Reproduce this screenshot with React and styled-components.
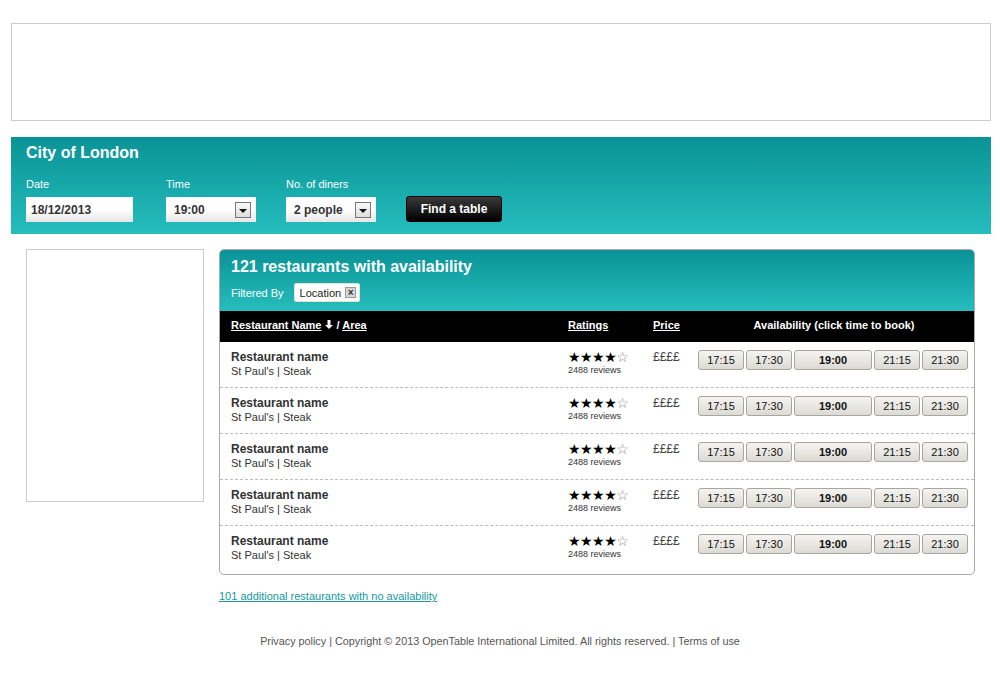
import React from 'react'
import styled, { createGlobalStyle } from 'styled-components'

const GlobalStyle = createGlobalStyle`
  body {
    margin: 0;
    background: #fff;
    font-family: "Liberation Sans", Arial, sans-serif;
    color: #333;
  }
`

const Page = styled.div`
  width: 1000px;
  padding-top: 23px;
`

const AdBox = styled.div`
  margin-left: 11px;
  width: 980px;
  height: 98px;
  box-sizing: border-box;
  border: 1px solid #ccc;
`

const SearchBar = styled.div`
  margin: 16px 0 0 11px;
  width: 980px;
  height: 97px;
  box-sizing: border-box;
  padding: 7px 15px 0;
  background: linear-gradient(to bottom, #0a9397, #26bdbd);
  color: #fff;

  h2 {
    margin: 0;
    font-size: 16px;
    font-weight: bold;
    line-height: 18px;
  }
`

const Fields = styled.div`
  display: flex;
  align-items: flex-end;
  margin-top: 16px;
`

const Field = styled.div`
  width: ${(p) => p.w}px;
  label {
    display: block;
    font-size: 11px;
    line-height: 13px;
    margin-bottom: 6px;
  }
`

const Input = styled.div`
  box-sizing: border-box;
  width: ${(p) => p.w}px;
  height: 25px;
  display: flex;
  align-items: center;
  justify-content: space-between;
  padding: 0 5px 0 ${(p) => p.pl || 5}px;
  background: linear-gradient(to bottom, #fff 50%, #e6e6e6);
  color: #333;
  font-size: 12px;
  font-weight: bold;
`

const DropArrow = styled.span`
  width: 16px;
  height: 16px;
  box-sizing: border-box;
  border: 1px solid #777;
  background: linear-gradient(to bottom, #fafafa, #ddd);
  display: flex;
  align-items: center;
  justify-content: center;
  &::after {
    content: '';
    border-left: 4px solid transparent;
    border-right: 4px solid transparent;
    border-top: 4px solid #111;
    margin-top: 2px;
  }
`

const FindButton = styled.button`
  width: 96px;
  height: 26px;
  border: 1px solid #000;
  border-radius: 3px;
  background: linear-gradient(to bottom, #3a3a3a, #000);
  color: #fff;
  font-family: inherit;
  font-size: 12px;
  font-weight: bold;
  padding: 0;
`

const Content = styled.div`
  display: flex;
  gap: 15px;
  margin: 15px 0 0 26px;
`

const SideBox = styled.div`
  width: 178px;
  height: 253px;
  box-sizing: border-box;
  border: 1px solid #ccc;
`

const Main = styled.div`
  width: 756px;
`

const Panel = styled.div`
  box-sizing: border-box;
  border: 1px solid #aaa;
  border-radius: 5px;
  overflow: hidden;
  padding-bottom: 2px;
`

const PanelHead = styled.div`
  height: 61px;
  box-sizing: border-box;
  padding: 8px 11px 0;
  background: linear-gradient(to bottom, #0a9397, #26bdbd);
  color: #fff;

  h1 {
    margin: 0;
    font-size: 16px;
    line-height: 18px;
  }
`

const FilterRow = styled.div`
  display: flex;
  align-items: center;
  margin-top: 7px;
  font-size: 11px;
  gap: 10px;
`

const Pill = styled.span`
  display: inline-flex;
  align-items: center;
  gap: 4px;
  height: 19px;
  box-sizing: border-box;
  padding: 0 3px 0 5px;
  background: #fff;
  border: 1px solid #e8e2c8;
  border-radius: 2px;
  color: #222;
  font-size: 11px;
`

const CloseBox = styled.span`
  width: 11px;
  height: 11px;
  box-sizing: border-box;
  border: 1px solid #999;
  background: #d6d6d6;
  color: #333;
  font-size: 10px;
  line-height: 9px;
  text-align: center;
  font-weight: bold;
`

const Grid = styled.div`
  display: grid;
  grid-template-columns: 337px 85px 45px 1fr;
  padding: 0 6px 0 11px;
`

const HeadRow = styled(Grid)`
  background: #000;
  color: #fff;
  height: 31px;
  box-sizing: border-box;
  padding-bottom: 4px;
  align-items: center;
  font-size: 11px;
  font-weight: bold;

  a {
    color: #fff;
    text-decoration: underline;
  }
`

const AvailHead = styled.span`
  text-align: center;
  padding-left: 2px;
`

const Row = styled(Grid)`
  height: 46px;
  box-sizing: border-box;
  padding-top: 8px;
  border-bottom: ${(p) => (p.last ? 'none' : '1px dashed #bbb')};
`

const NameCell = styled.div`
  strong {
    display: block;
    font-size: 12px;
    line-height: 14px;
    color: #333;
  }
  span {
    display: block;
    font-size: 11px;
    line-height: 14px;
    color: #333;
  }
`

const RatingCell = styled.div`
  .stars {
    font-family: "DejaVu Sans", sans-serif;
    font-size: 14px;
    line-height: 14px;
    color: #000;
    letter-spacing: -0.5px;
  }
  .empty {
    color: #888;
  }
  .reviews {
    font-size: 9px;
    line-height: 13px;
    color: #333;
  }
`

const Price = styled.div`
  font-size: 12px;
  color: #444;
`

const Times = styled.div`
  display: flex;
  gap: 2px;
`

const TimeButton = styled.button`
  width: ${(p) => (p.wide ? 78 : 46)}px;
  height: 20px;
  padding: 0;
  border: 1px solid #a9a59c;
  border-radius: 3px;
  background: linear-gradient(to bottom, #f4f4f2, #dcdad4);
  font-family: inherit;
  font-size: 11px;
  font-weight: ${(p) => (p.wide ? 'bold' : 'normal')};
  color: #111;
`

const MoreLink = styled.a`
  display: inline-block;
  margin-top: 15px;
  font-size: 11px;
  color: #16979c;
  text-decoration: underline;
`

const Footer = styled.div`
  text-align: center;
  margin-top: 31px;
  font-size: 10.8px;
  color: #555;
`

const SortArrow = () => (
  <svg width="8" height="9" viewBox="0 0 8 9" style={{ margin: '0 3px 0 4px' }}>
    <path d="M2.5 0h3v5h2.5L4 9 0 5h2.5z" fill="#fff" />
  </svg>
)

const rows = [1, 2, 3, 4, 5]
const times = ['17:15', '17:30', '19:00', '21:15', '21:30']

const App = () => {
  return (
    <Page>
      <GlobalStyle />
      <AdBox />
      <SearchBar>
        <h2>City of London</h2>
        <Fields>
          <Field w={140}>
            <label>Date</label>
            <Input w={107}>18/12/2013</Input>
          </Field>
          <Field w={120}>
            <label>Time</label>
            <Input w={90} pl={8}>
              19:00
              <DropArrow />
            </Input>
          </Field>
          <Field w={120}>
            <label>No. of diners</label>
            <Input w={90} pl={8}>
              2 people
              <DropArrow />
            </Input>
          </Field>
          <FindButton>Find a table</FindButton>
        </Fields>
      </SearchBar>
      <Content>
        <SideBox />
        <Main>
          <Panel>
            <PanelHead>
              <h1>121 restaurants with availability</h1>
              <FilterRow>
                Filtered By
                <Pill>
                  Location
                  <CloseBox>×</CloseBox>
                </Pill>
              </FilterRow>
            </PanelHead>
            <HeadRow>
              <span>
                <a>Restaurant Name</a>
                <SortArrow />/ <a>Area</a>
              </span>
              <span>
                <a>Ratings</a>
              </span>
              <span>
                <a>Price</a>
              </span>
              <AvailHead>Availability (click time to book)</AvailHead>
            </HeadRow>
            {rows.map((r, i) => (
              <Row key={r} last={i === rows.length - 1}>
                <NameCell>
                  <strong>Restaurant name</strong>
                  <span>St Paul's | Steak</span>
                </NameCell>
                <RatingCell>
                  <div className="stars">
                    ★★★★<span className="empty">☆</span>
                  </div>
                  <div className="reviews">2488 reviews</div>
                </RatingCell>
                <Price>££££</Price>
                <Times>
                  {times.map((t) => (
                    <TimeButton key={t} wide={t === '19:00'}>
                      {t}
                    </TimeButton>
                  ))}
                </Times>
              </Row>
            ))}
          </Panel>
          <MoreLink>101 additional restaurants with no availability</MoreLink>
        </Main>
      </Content>
      <Footer>
        Privacy policy | Copyright © 2013 OpenTable International Limited. All rights reserved. | Terms of use
      </Footer>
    </Page>
  )
}

export default App
